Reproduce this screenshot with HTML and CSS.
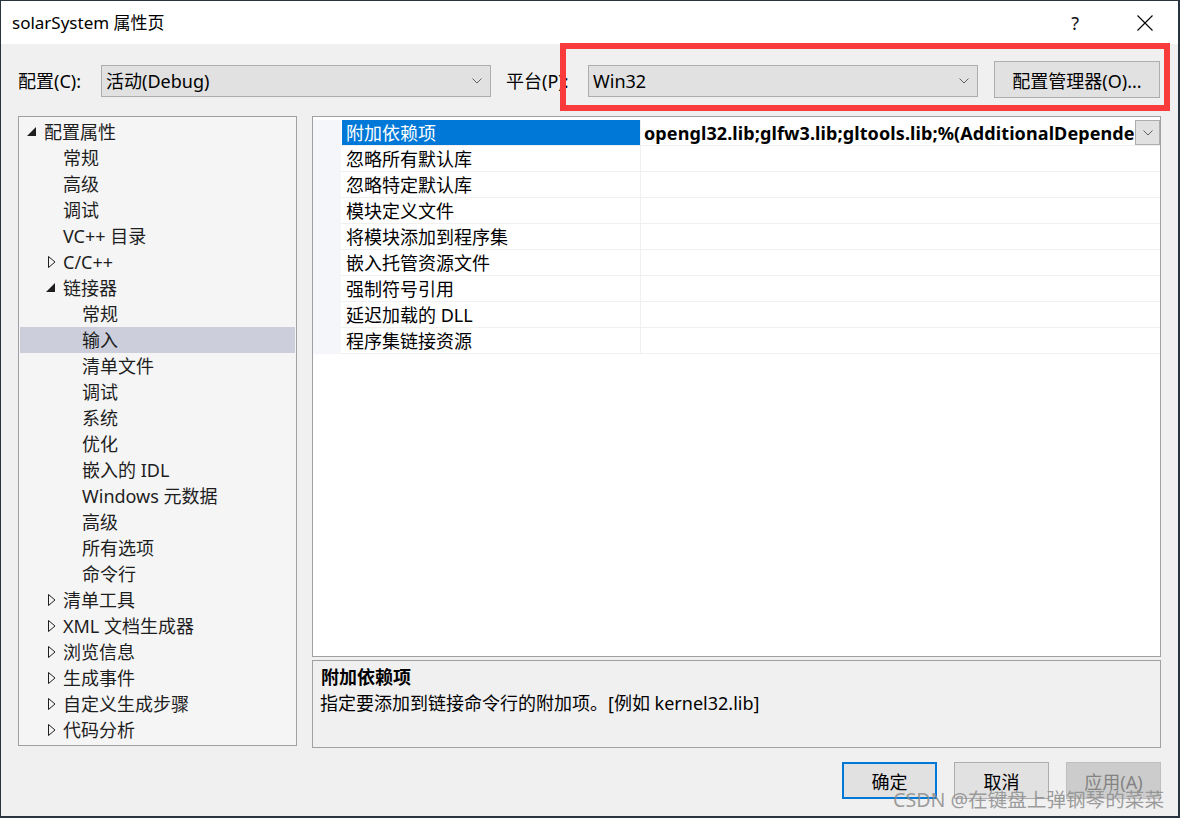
FILE: index.html
```html
<!DOCTYPE html>
<html lang="zh-CN">
<head>
<meta charset="utf-8">
<title>solarSystem 属性页</title>
<link rel="stylesheet" href="styles.css">
</head>
<body>
<div class="window">
  <div class="titlebar">
    <span class="title">solarSystem 属性页</span>
    <span class="help">?</span>
    <span class="close"><svg width="16" height="16" viewBox="0 0 16 16"><path d="M0.5 0.5 L15.5 15.5 M15.5 0.5 L0.5 15.5" stroke="#000" stroke-width="1.1" fill="none"/></svg></span>
  </div>

  <div class="toolbar">
    <span class="lbl lbl-config">配置(C):</span>
    <div class="combo"><span class="combo-text">活动(Debug)</span><svg class="chev" width="10" height="6" viewBox="0 0 10 6"><polyline points="0.5,0.5 5,5 9.5,0.5" fill="none" stroke="#606060" stroke-width="1"/></svg></div>
    <span class="lbl lbl-platform">平台(P):</span>
    <div class="combo"><span class="combo-text">Win32</span><svg class="chev" width="10" height="6" viewBox="0 0 10 6"><polyline points="0.5,0.5 5,5 9.5,0.5" fill="none" stroke="#606060" stroke-width="1"/></svg></div>
    <button class="btn btn-manager">配置管理器(O)...</button>
  </div>

  <div class="main">
    <div class="tree">
      <div class="row l0"><span class="tg"><svg class="exp" width="9" height="9" viewBox="0 0 9 9"><polygon points="9,0 9,9 0,9" fill="#1e1e1e"/></svg></span><span>配置属性</span></div>
      <div class="row l1"><span class="tg"></span><span>常规</span></div>
      <div class="row l1"><span class="tg"></span><span>高级</span></div>
      <div class="row l1"><span class="tg"></span><span>调试</span></div>
      <div class="row l1"><span class="tg"></span><span>VC++ 目录</span></div>
      <div class="row l0b"><span class="tg"><svg class="col" width="8" height="12" viewBox="0 0 8 12"><polygon points="0.5,0.5 7,6 0.5,11.5" fill="none" stroke="#1e1e1e" stroke-width="1"/></svg></span><span>C/C++</span></div>
      <div class="row l0b"><span class="tg"><svg class="exp" width="9" height="9" viewBox="0 0 9 9"><polygon points="9,0 9,9 0,9" fill="#1e1e1e"/></svg></span><span>链接器</span></div>
      <div class="row l2"><span class="tg"></span><span>常规</span></div>
      <div class="row l2 selected"><span class="tg"></span><span>输入</span></div>
      <div class="row l2"><span class="tg"></span><span>清单文件</span></div>
      <div class="row l2"><span class="tg"></span><span>调试</span></div>
      <div class="row l2"><span class="tg"></span><span>系统</span></div>
      <div class="row l2"><span class="tg"></span><span>优化</span></div>
      <div class="row l2"><span class="tg"></span><span>嵌入的 IDL</span></div>
      <div class="row l2"><span class="tg"></span><span>Windows 元数据</span></div>
      <div class="row l2"><span class="tg"></span><span>高级</span></div>
      <div class="row l2"><span class="tg"></span><span>所有选项</span></div>
      <div class="row l2"><span class="tg"></span><span>命令行</span></div>
      <div class="row l0b"><span class="tg"><svg class="col" width="8" height="12" viewBox="0 0 8 12"><polygon points="0.5,0.5 7,6 0.5,11.5" fill="none" stroke="#1e1e1e" stroke-width="1"/></svg></span><span>清单工具</span></div>
      <div class="row l0b"><span class="tg"><svg class="col" width="8" height="12" viewBox="0 0 8 12"><polygon points="0.5,0.5 7,6 0.5,11.5" fill="none" stroke="#1e1e1e" stroke-width="1"/></svg></span><span>XML 文档生成器</span></div>
      <div class="row l0b"><span class="tg"><svg class="col" width="8" height="12" viewBox="0 0 8 12"><polygon points="0.5,0.5 7,6 0.5,11.5" fill="none" stroke="#1e1e1e" stroke-width="1"/></svg></span><span>浏览信息</span></div>
      <div class="row l0b"><span class="tg"><svg class="col" width="8" height="12" viewBox="0 0 8 12"><polygon points="0.5,0.5 7,6 0.5,11.5" fill="none" stroke="#1e1e1e" stroke-width="1"/></svg></span><span>生成事件</span></div>
      <div class="row l0b"><span class="tg"><svg class="col" width="8" height="12" viewBox="0 0 8 12"><polygon points="0.5,0.5 7,6 0.5,11.5" fill="none" stroke="#1e1e1e" stroke-width="1"/></svg></span><span>自定义生成步骤</span></div>
      <div class="row l0b"><span class="tg"><svg class="col" width="8" height="12" viewBox="0 0 8 12"><polygon points="0.5,0.5 7,6 0.5,11.5" fill="none" stroke="#1e1e1e" stroke-width="1"/></svg></span><span>代码分析</span></div>
    </div>

    <div class="right">
      <div class="grid">
        <div class="prow sel">
          <div class="strip"></div>
          <div class="name">附加依赖项</div>
          <div class="value"><span class="vtext">opengl32.lib;glfw3.lib;gltools.lib;%(AdditionalDependencies)</span><span class="dd"><svg width="10" height="6" viewBox="0 0 10 6"><polyline points="0.5,0.5 5,5 9.5,0.5" fill="none" stroke="#606060" stroke-width="1"/></svg></span></div>
        </div>
        <div class="prow"><div class="strip"></div><div class="name">忽略所有默认库</div><div class="value"></div></div>
        <div class="prow"><div class="strip"></div><div class="name">忽略特定默认库</div><div class="value"></div></div>
        <div class="prow"><div class="strip"></div><div class="name">模块定义文件</div><div class="value"></div></div>
        <div class="prow"><div class="strip"></div><div class="name">将模块添加到程序集</div><div class="value"></div></div>
        <div class="prow"><div class="strip"></div><div class="name">嵌入托管资源文件</div><div class="value"></div></div>
        <div class="prow"><div class="strip"></div><div class="name">强制符号引用</div><div class="value"></div></div>
        <div class="prow"><div class="strip"></div><div class="name">延迟加载的 DLL</div><div class="value"></div></div>
        <div class="prow"><div class="strip"></div><div class="name">程序集链接资源</div><div class="value"></div></div>
      </div>
      <div class="desc">
        <div class="desc-title">附加依赖项</div>
        <div class="desc-text">指定要添加到链接命令行的附加项。[例如 kernel32.lib]</div>
      </div>
    </div>
  </div>

  <div class="footer">
    <button class="btn btn-ok">确定</button>
    <button class="btn">取消</button>
    <button class="btn btn-disabled">应用(A)</button>
  </div>

  <div class="highlight"></div>
  <div class="watermark">CSDN @在键盘上弹钢琴的菜菜</div>
</div>
</body>
</html>
```

FILE: styles.css
```css
html, body {
  margin: 0;
  padding: 0;
  background: #1f2b36;
}

.window {
  position: relative;
  width: 1180px;
  height: 818px;
  box-sizing: border-box;
  border-top: 1px solid #2a3440;
  border-left: 1px solid #2a3440;
  border-right: 2px solid #2a3440;
  border-bottom: 2px solid #2a3440;
  background: #f0f0f0;
  font-family: "Noto Sans", "Noto Sans CJK SC", sans-serif;
  font-size: 18px;
  color: #000;
  display: flex;
  flex-direction: column;
  overflow: hidden;
}

/* title bar */
.titlebar {
  height: 43px;
  flex: none;
  background: #fff;
  display: flex;
  align-items: center;
  padding-left: 11px;
}
.title {
  flex: 1;
  font-size: 17px;
  line-height: 24px;
}
.help {
  font-size: 18px;
  line-height: 24px;
  margin-right: 58px;
  color: #111;
}
.close {
  display: flex;
  margin-right: 25px;
}

/* toolbar */
.toolbar {
  height: 72px;
  flex: none;
  box-sizing: border-box;
  padding: 17px 0 0 17px;
  display: flex;
  align-items: flex-start;
}
.lbl {
  margin-top: 4px;
  line-height: 32px;
  white-space: nowrap;
}
.lbl-config { width: 83px; }
.lbl-platform { width: 82px; margin-left: 15px; }
.combo {
  margin-top: 4px;
  width: 390px;
  height: 32px;
  box-sizing: border-box;
  border: 1px solid #adadad;
  background: #e1e1e1;
  display: flex;
  align-items: center;
  padding: 0 8px 0 4px;
}
.combo-text {
  flex: 1;
  line-height: 30px;
}
.chev { display: block; }

.btn {
  font-family: inherit;
  font-size: 18px;
  color: #000;
  background: #e1e1e1;
  border: 1px solid #adadad;
  box-sizing: border-box;
  padding: 0;
  margin: 0;
}
.btn-manager {
  margin-left: 16px;
  width: 166px;
  height: 37px;
}

/* main */
.main {
  flex: none;
  display: flex;
  padding: 0 17px;
  gap: 15px;
  height: 632px;
}
.tree {
  width: 279px;
  height: 630px;
  box-sizing: border-box;
  border: 1px solid #a0a0a0;
  background: #f5f5f5;
  padding-top: 2px;
  flex: none;
}
.row {
  height: 26px;
  line-height: 26px;
  display: flex;
  align-items: center;
  color: #1e1e1e;
  white-space: nowrap;
}
.row .tg {
  width: 19px;
  flex: none;
  display: flex;
  align-items: center;
}
.row.l0 { padding-left: 6px; }
.row.l0b { padding-left: 25px; }
.row.l1 { padding-left: 25px; }
.row.l2 { padding-left: 44px; }
.tg .exp { margin-left: 2px; margin-top: -2px; }
.tg .col { margin-left: 4px; }
.row.selected {
  background: #cccedb;
  margin: 0 1px;
  padding-left: 43px;
}

.right {
  flex: 1;
  display: flex;
  flex-direction: column;
  gap: 3px;
}
.grid {
  height: 541px;
  box-sizing: border-box;
  border: 1px solid #a0a0a0;
  background: #fff;
  padding-top: 3px;
}
.prow {
  display: grid;
  grid-template-columns: 28px 300px 1fr;
  height: 26px;
}
.strip {
  background: #f4f6fa;
}
.name, .value {
  box-sizing: border-box;
  border-bottom: 1px solid #f0f0f0;
  line-height: 26px;
  white-space: nowrap;
  overflow: hidden;
}
.name {
  padding-left: 5px;
  border-right: 1px solid #f0f0f0;
}
.value {
  padding-left: 3px;
  display: flex;
  align-items: flex-start;
}
.prow.sel .name {
  background: #0078d7;
  color: #fff;
  margin-left: 1px;
  padding-left: 4px;
}
.vtext {
  flex: 1;
  overflow: hidden;
  font-weight: bold;
  white-space: nowrap;
  letter-spacing: 0.1px;
}
.dd {
  flex: none;
  width: 25px;
  height: 25px;
  box-sizing: border-box;
  border: 1px solid #adadad;
  background: #e1e1e1;
  display: flex;
  align-items: center;
  justify-content: center;
}

.desc {
  height: 88px;
  box-sizing: border-box;
  border: 1px solid #a0a0a0;
  background: #f0f0f0;
  padding: 3px 8px 0 7px;
}
.desc-title {
  font-weight: bold;
  line-height: 26px;
  padding-left: 1px;
}
.desc-text {
  line-height: 26px;
}

/* footer */
.footer {
  flex: none;
  display: flex;
  justify-content: flex-end;
  gap: 17px;
  padding: 14px 17px 0 0;
}
.footer .btn {
  width: 95px;
  height: 37px;
}
.btn-ok {
  border: 2px solid #0078d7;
}
.btn-disabled {
  background: #cccccc;
  border-color: #bfbfbf;
  color: #838383;
}

/* overlays */
.highlight {
  position: absolute;
  left: 559px;
  top: 42px;
  width: 610px;
  height: 68px;
  box-sizing: border-box;
  border: 6px solid #fa3b3b;
  pointer-events: none;
}
.watermark {
  position: absolute;
  left: 892px;
  top: 787px;
  font-size: 19.6px;
  line-height: 24px;
  color: rgba(140, 140, 140, 0.85);
  white-space: nowrap;
  pointer-events: none;
}
```
